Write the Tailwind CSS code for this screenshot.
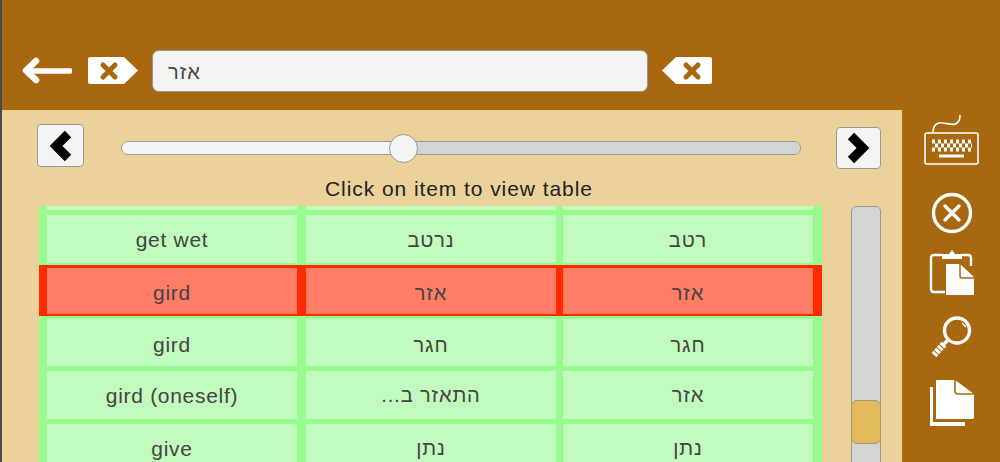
<!DOCTYPE html>
<html lang="en">
<head>
  <meta charset="UTF-8" />
  <title>Verb Tables</title>
  <script src="https://cdn.jsdelivr.net/npm/@tailwindcss/browser@4"></script>
</head>
<body class="bg-[#a8680f]">
  <div class="h-[462px] w-[1000px] overflow-hidden flex flex-col border-l-2 border-[#4a4a48] font-['Liberation_Sans',sans-serif] text-[#444]">

    <!-- header -->
    <div class="h-[110px] shrink-0 bg-[#a8680f] pt-[50px] pl-[20px] flex items-start">
      <svg class="w-[50px] h-[27px] mt-[7px]" viewBox="0 0 50 27">
        <path d="M14 4 L4 13.5 L14 23" fill="none" stroke="#fff" stroke-width="6.5" stroke-linecap="round" stroke-linejoin="round"/>
        <path d="M6 14 H48" fill="none" stroke="#fff" stroke-width="5.5" stroke-linecap="round"/>
      </svg>
      <svg class="w-[50px] h-[27px] mt-[7px] ml-[16px]" viewBox="0 0 50 27">
        <path d="M2 0 H36 L50 13.5 L36 27 H2 Q0 27 0 25 V2 Q0 0 2 0 Z" fill="#fff"/>
        <path d="M15 8 L27 20 M27 8 L15 20" stroke="#a8680f" stroke-width="5" stroke-linecap="round"/>
      </svg>
      <div dir="rtl" class="ml-[14px] w-[496px] h-[42px] pt-[1px] bg-[#f4f4f4] border border-[#999] rounded-[7px] flex items-center justify-end pl-[15px] text-[20px] tracking-[1px]">אזר</div>
      <svg class="w-[50px] h-[27px] mt-[7px] ml-[14px]" viewBox="0 0 50 27">
        <path d="M48 0 H14 L0 13.5 L14 27 H48 Q50 27 50 25 V2 Q50 0 48 0 Z" fill="#fff"/>
        <path d="M24 8 L36 20 M36 8 L24 20" stroke="#a8680f" stroke-width="5" stroke-linecap="round"/>
      </svg>
    </div>

    <div class="flex flex-1 min-h-0">
      <!-- panel -->
      <div class="w-[900px] shrink-0 bg-[#ebd29b] relative">
        <div class="h-[96px] pl-[35px] pr-[21px] relative">
          <div class="flex items-start">
            <button class="mt-[14px] w-[47px] h-[43px] bg-[#f4f4f4] border border-[#999] rounded-[4px] flex items-center justify-center">
              <svg class="w-[26px] h-[32px]" viewBox="0 0 26 32"><path d="M20 4 L8 16 L20 28" fill="none" stroke="#000" stroke-width="9" stroke-linejoin="miter"/></svg>
            </button>
            <div class="relative mt-[31px] ml-[37px] w-[680px] h-[14px] rounded-full border border-[#999] flex overflow-visible">
              <div class="w-[281px] bg-[#f5f5f5] rounded-l-full"></div>
              <div class="flex-1 bg-[#d4d4d4] rounded-r-full"></div>
              <div class="absolute left-[267px] top-[-8px] w-[29px] h-[29px] rounded-full bg-[#f4f4f4] border border-[#999]"></div>
            </div>
            <button class="mt-[17px] ml-[35px] w-[45px] h-[42px] bg-[#f4f4f4] border border-[#999] rounded-[4px] flex items-center justify-center">
              <svg class="w-[26px] h-[32px] -ml-[2px]" viewBox="0 0 26 32"><path d="M6 4 L18 16 L6 28" fill="none" stroke="#000" stroke-width="9" stroke-linejoin="miter"/></svg>
            </button>
          </div>
          <div class="absolute left-[323px] top-[67px] text-[21px] leading-[23px] tracking-[0.93px] text-[#222] whitespace-nowrap">Click on item to view table</div>
        </div>

        <div class="flex pl-[37px]">
          <!-- table -->
          <div class="w-[783px] h-[256px] bg-[#98fb8e] rounded-tl-[3px] overflow-hidden text-[20px] tracking-[0.9px] text-center">
            <div class="flex pl-[8px] h-[4px]">
              <div class="w-[250px] bg-[#c1fbbd]"></div>
              <div class="w-[250px] ml-[9px] bg-[#c1fbbd]"></div>
              <div class="w-[250px] ml-[7px] bg-[#c1fbbd]"></div>
            </div>
            <div class="flex pl-[8px] h-[48px] mt-[5px] leading-[50px]">
              <div class="w-[250px] bg-[#c1fbbd] text-[21px] tracking-[0.7px]">get wet</div>
              <div dir="rtl" class="w-[250px] ml-[9px] bg-[#c1fbbd]">נרטב</div>
              <div dir="rtl" class="w-[250px] ml-[7px] bg-[#c1fbbd]">רטב</div>
            </div>
            <div class="flex pl-[8px] h-[51px] mt-[2px] pt-[3px] pb-[2px] bg-[#ff2a00] leading-[50px]">
              <div class="w-[250px] bg-[#ff7d66] text-[21px] tracking-[0.7px]">gird</div>
              <div dir="rtl" class="w-[250px] ml-[9px] bg-[#ff7d66]">אזר</div>
              <div dir="rtl" class="w-[250px] ml-[7px] bg-[#ff7d66]">אזר</div>
            </div>
            <div class="flex pl-[8px] h-[47px] mt-[3px] leading-[52px]">
              <div class="w-[250px] bg-[#c1fbbd] text-[21px] tracking-[0.7px]">gird</div>
              <div dir="rtl" class="w-[250px] ml-[9px] bg-[#c1fbbd]">חגר</div>
              <div dir="rtl" class="w-[250px] ml-[7px] bg-[#c1fbbd]">חגר</div>
            </div>
            <div class="flex pl-[8px] h-[48px] mt-[5px] leading-[49px]">
              <div class="w-[250px] bg-[#c1fbbd] text-[21px] tracking-[0.7px]">gird (oneself)</div>
              <div dir="rtl" class="w-[250px] ml-[9px] bg-[#c1fbbd]">התאזר ב...</div>
              <div dir="rtl" class="w-[250px] ml-[7px] bg-[#c1fbbd]">אזר</div>
            </div>
            <div class="flex pl-[8px] h-[48px] mt-[5px] leading-[49px]">
              <div class="w-[250px] bg-[#c1fbbd] text-[21px] tracking-[0.7px]">give</div>
              <div dir="rtl" class="w-[250px] ml-[9px] bg-[#c1fbbd]">נתן</div>
              <div dir="rtl" class="w-[250px] ml-[7px] bg-[#c1fbbd]">נתן</div>
            </div>
          </div>
          <!-- scrollbar -->
          <div class="ml-[29px] w-[30px] h-[270px] bg-[#d4d4d4] border border-[#999] rounded-[5px] pt-[193px]">
            <div class="h-[44px] -mx-px bg-[#e2b95c] border border-[#a99a6c] rounded-[6px]"></div>
          </div>
        </div>
      </div>

      <!-- side icons -->
      <div class="flex-1 flex flex-col items-center pl-[1px]">
        <svg class="w-[56px] h-[52px] mt-[4px]" viewBox="0 0 56 52" fill="none" stroke="#fff">
          <path d="M9 19 C9 11 13 8 19 9 C26 10 31 12 34 8 C36 6 36 3 36 1" stroke-width="1.6"/>
          <rect x="1" y="19" width="53" height="31" rx="2" stroke-width="1.6"/>
          <path d="M8 27.5 H48 M11 31.5 H48 M8 35.5 H48" stroke-width="4" stroke-dasharray="3 3"/>
          <path d="M15 42 H40" stroke-width="3"/>
        </svg>
        <svg class="w-[42px] h-[42px] mt-[26px]" viewBox="0 0 42 42" fill="none" stroke="#fff" stroke-linecap="round">
          <circle cx="21" cy="21" r="18.5" stroke-width="3.4"/>
          <path d="M14 14 L28 28 M28 14 L14 28" stroke-width="3.4"/>
        </svg>
        <svg class="w-[46px] h-[46px] mt-[16px]" viewBox="0 0 46 46">
          <path d="M13 5 H5 Q2 5 2 8 V39 Q2 42 5 42 H16 M33 5 H39 Q42 5 42 8 V16" fill="none" stroke="#fff" stroke-width="2.4"/>
          <path d="M13 4 H20 L23 0 L26 4 H33 V9 H13 Z" fill="#fff"/>
          <path d="M17 14 H31 L45 27 V45 H17 Z" fill="#fff"/>
          <path d="M31 14 V26 Q31 28 33 28 H45" fill="none" stroke="#a8680f" stroke-width="1.5"/>
        </svg>
        <svg class="w-[42px] h-[46px] mt-[19px]" viewBox="0 0 42 46" fill="none" stroke="#fff">
          <circle cx="26" cy="15.5" r="12.5" stroke-width="3.4"/>
          <path d="M31 8 L35 12" stroke-width="1.5"/>
          <path d="M17 25 L12 30" stroke-width="3.4"/>
          <path d="M13 29 L3 40" stroke-width="6.5" stroke-dasharray="3 1"/>
        </svg>
        <svg class="w-[46px] h-[49px] mt-[18px]" viewBox="0 0 46 49" fill="#fff">
          <path d="M7 1 H26 L45 15 V38 Q45 40 43 40 H7 Z"/>
          <path d="M26 1 V12 Q26 15 29 15 H45" fill="none" stroke="#a8680f" stroke-width="1.6"/>
          <path d="M1 8 H4 V43 H36 V47 H1 Z"/>
        </svg>
      </div>
    </div>
  </div>
</body>
</html>
